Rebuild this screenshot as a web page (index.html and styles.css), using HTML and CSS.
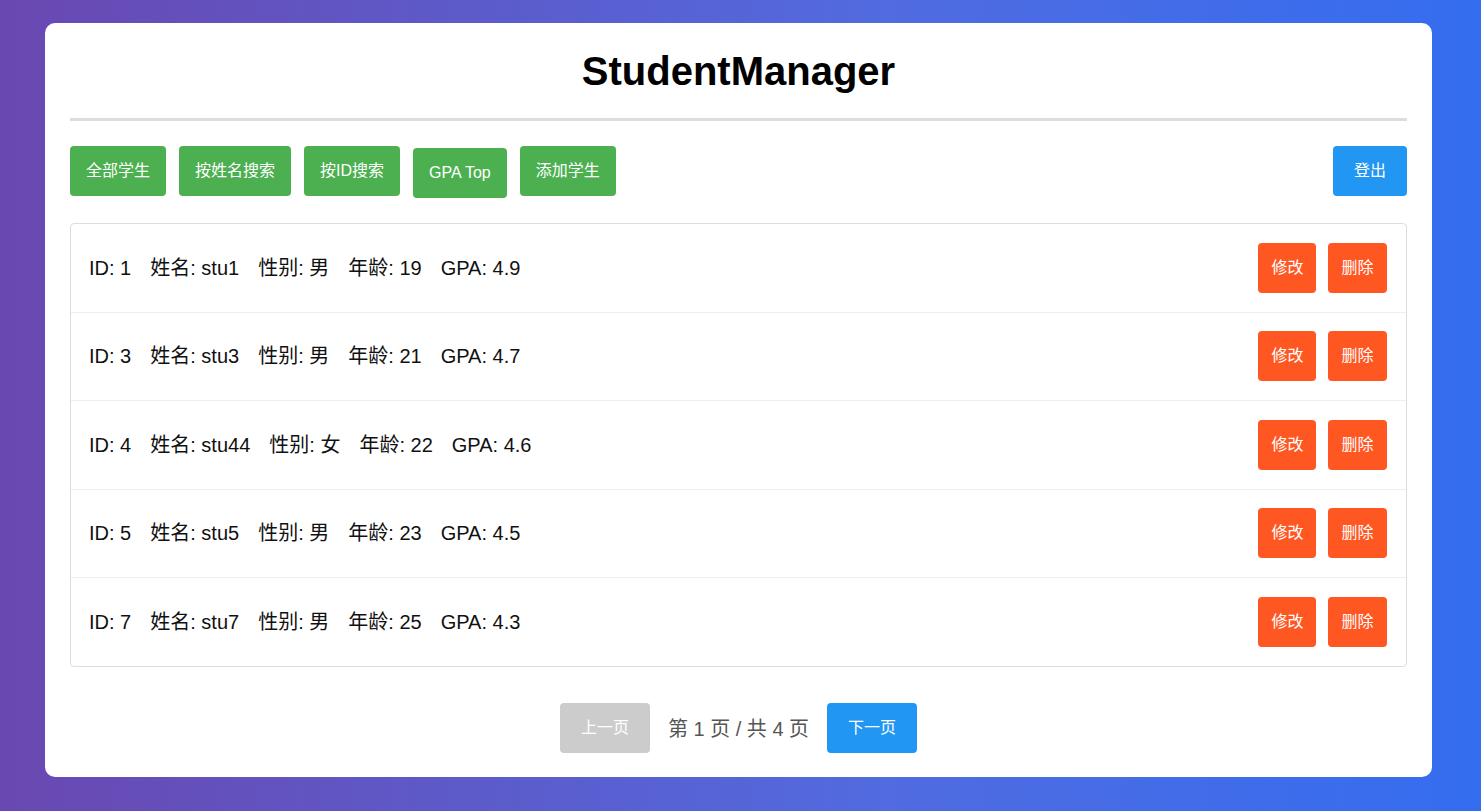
FILE: index.html
```html
<!DOCTYPE html>
<html lang="zh">
<head>
<meta charset="utf-8">
<title>StudentManager</title>
<link rel="stylesheet" href="styles.css">
</head>
<body>
<div class="app">
  <header class="header">
    <h1 class="title">StudentManager</h1>
  </header>
  <div class="toolbar">
    <div class="toolbar-left">
      <button class="btn btn-green">全部学生</button>
      <button class="btn btn-green">按姓名搜索</button>
      <button class="btn btn-green">按ID搜索</button>
      <button class="btn btn-green btn-shift">GPA Top</button>
      <button class="btn btn-green">添加学生</button>
    </div>
    <button class="btn btn-blue btn-wide">登出</button>
  </div>
  <ul class="list">
    <li class="row">
      <div class="info"><span>ID: 1</span><span>姓名: stu1</span><span>性别: 男</span><span>年龄: 19</span><span>GPA: 4.9</span></div>
      <div class="actions"><button class="btn btn-orange">修改</button><button class="btn btn-orange">删除</button></div>
    </li>
    <li class="row">
      <div class="info"><span>ID: 3</span><span>姓名: stu3</span><span>性别: 男</span><span>年龄: 21</span><span>GPA: 4.7</span></div>
      <div class="actions"><button class="btn btn-orange">修改</button><button class="btn btn-orange">删除</button></div>
    </li>
    <li class="row">
      <div class="info"><span>ID: 4</span><span>姓名: stu44</span><span>性别: 女</span><span>年龄: 22</span><span>GPA: 4.6</span></div>
      <div class="actions"><button class="btn btn-orange">修改</button><button class="btn btn-orange">删除</button></div>
    </li>
    <li class="row">
      <div class="info"><span>ID: 5</span><span>姓名: stu5</span><span>性别: 男</span><span>年龄: 23</span><span>GPA: 4.5</span></div>
      <div class="actions"><button class="btn btn-orange">修改</button><button class="btn btn-orange">删除</button></div>
    </li>
    <li class="row">
      <div class="info"><span>ID: 7</span><span>姓名: stu7</span><span>性别: 男</span><span>年龄: 25</span><span>GPA: 4.3</span></div>
      <div class="actions"><button class="btn btn-orange">修改</button><button class="btn btn-orange">删除</button></div>
    </li>
  </ul>
  <div class="pager">
    <button class="btn btn-gray btn-wide">上一页</button>
    <span class="pager-text">第 1 页 / 共 4 页</span>
    <button class="btn btn-blue btn-wide">下一页</button>
  </div>
</div>
</body>
</html>
```

FILE: styles.css
```css
* { box-sizing: border-box; }
html, body { height: 100%; }
body {
  margin: 0;
  padding: 23px 0 0 45px;
  background: linear-gradient(90deg, #6a48b1 0%, #516be0 60%, #346df0 100%);
  font-family: "Liberation Sans", Arial, "Noto Sans CJK SC", sans-serif;
  color: #111;
}
.app {
  width: 1387px;
  height: 754px;
  background: #fff;
  border-radius: 10px;
  padding: 25px;
}
.header {
  border-bottom: 3px solid #ddd;
  padding-bottom: 24px;
}
.title {
  margin: 0;
  text-align: center;
  font-size: 40px;
  line-height: 46px;
  font-weight: bold;
  color: #000;
}
.toolbar {
  display: flex;
  justify-content: space-between;
  align-items: flex-start;
  margin-top: 25px;
  height: 52px;
}
.toolbar-left {
  display: flex;
  gap: 13px;
  align-items: flex-start;
}
.btn {
  border: 0;
  border-radius: 4px;
  color: #fff;
  font-family: "Liberation Sans", Arial, "Noto Sans CJK SC", sans-serif;
  font-size: 16px;
  line-height: 22px;
  padding: 14px 16px;
  cursor: pointer;
}
.btn-shift { margin-top: 2px; }
.btn-green { background: #4caf50; }
.btn-blue { background: #2196f3; }
.btn-orange { background: #ff5722; padding: 14px 13px; }
.btn-gray { background: #cccccc; }
.btn-wide { padding: 14px 21px; }
.list {
  list-style: none;
  margin: 25px 0 0;
  padding: 0;
  border: 1px solid #ddd;
  border-radius: 4px;
}
.row {
  display: flex;
  justify-content: space-between;
  align-items: center;
  padding: 18.75px 19.5px 18.75px 18px;
  border-bottom: 1px solid #eee;
}
.row:last-child { border-bottom: 0; }
.info {
  display: flex;
  align-items: baseline;
  gap: 19px;
  font-size: 20px;
  line-height: 26px;
  color: #111;
}
.actions {
  display: flex;
  gap: 12px;
}
.pager {
  display: flex;
  justify-content: center;
  align-items: center;
  gap: 18px;
  margin-top: 36px;
}
.pager-text {
  font-size: 20px;
  color: #555;
}
```
